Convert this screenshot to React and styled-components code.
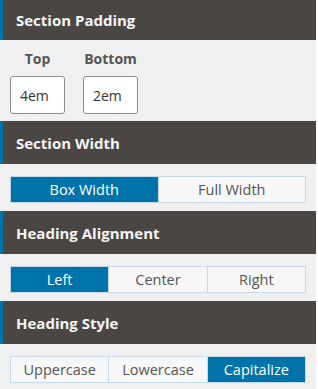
import React from 'react';
import styled, { createGlobalStyle } from 'styled-components';

const GlobalStyle = createGlobalStyle`
  html, body {
    margin: 0;
    padding: 0;
    background: #fff;
  }
  body {
    font-family: "Open Sans", "Noto Sans", sans-serif;
  }
`;

const Panel = styled.div`
  width: 316px;
  background: #f0f0f0;
`;

const Heading = styled.h3`
  margin: 0;
  height: ${(p) => p.h || 43}px;
  display: flex;
  align-items: center;
  padding: 0 13px;
  background: #4a4644;
  border-left: 3px solid #0073aa;
  box-sizing: border-box;
  color: #f4f4f4;
  font-size: 15px;
  font-weight: 700;
`;

const Body = styled.div`
  padding: 12px 10px 8px;
`;

const Dimensions = styled.div`
  display: flex;
  gap: 18px;
  padding: 10px 10px 7px;
`;

const Field = styled.label`
  display: flex;
  flex-direction: column;
  align-items: center;
  gap: 8px;
`;

const FieldLabel = styled.span`
  color: #555;
  font-size: 14px;
  font-weight: 700;
  line-height: 18px;
`;

const Input = styled.input`
  width: 55px;
  height: 38px;
  box-sizing: border-box;
  border: 1px solid #8c8f94;
  border-radius: 3px;
  background: #fff;
  padding: 0 9px;
  font-family: inherit;
  font-size: 14px;
  color: #333;
`;

const Group = styled.div`
  display: flex;
  border: 1px solid #c5d9ed;
`;

const Option = styled.button`
  flex: 1;
  height: 25px;
  border: 0;
  border-left: 1px solid #c5d9ed;
  background: ${(p) => (p.active ? '#0073aa' : '#f7f7f7')};
  color: ${(p) => (p.active ? '#fff' : '#555')};
  font-family: inherit;
  font-size: 14.5px;
  padding: 0;
  &:first-child {
    border-left: 0;
  }
`;

const Choice = ({ options, value }) => (
  <Body>
    <Group>
      {options.map((o) => (
        <Option key={o} active={o === value}>
          {o}
        </Option>
      ))}
    </Group>
  </Body>
);

export default function App() {
  return (
    <Panel>
      <GlobalStyle />
      <Heading h={40}>Section Padding</Heading>
      <Dimensions>
        <Field>
          <FieldLabel>Top</FieldLabel>
          <Input defaultValue="4em" />
        </Field>
        <Field>
          <FieldLabel>Bottom</FieldLabel>
          <Input defaultValue="2em" />
        </Field>
      </Dimensions>

      <Heading>Section Width</Heading>
      <Choice options={['Box Width', 'Full Width']} value="Box Width" />

      <Heading>Heading Alignment</Heading>
      <Choice options={['Left', 'Center', 'Right']} value="Left" />

      <Heading>Heading Style</Heading>
      <Choice options={['Uppercase', 'Lowercase', 'Capitalize']} value="Capitalize" />
    </Panel>
  );
}
